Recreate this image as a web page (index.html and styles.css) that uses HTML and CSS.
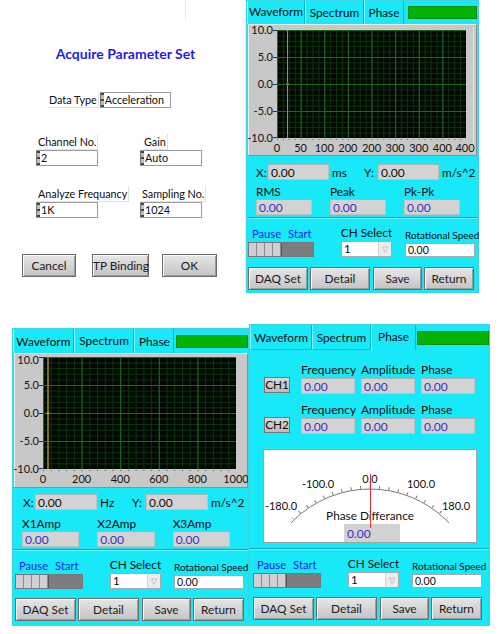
FILE: index.html
```html
<!DOCTYPE html>
<html lang="en">
<head>
    <meta charset="UTF-8">
    <meta name="viewport" content="width=device-width, initial-scale=1.0">
    <title>Acquire Parameter Set</title>
    <link rel="stylesheet" href="styles.css">
</head>
<body>
<div class="sheet">
    <div class="row row-top">
        <!-- acquisition settings dialog -->
        <div class="dialog">
            <div class="dlg-mark"></div>
            <h2 class="dlg-title">Acquire Parameter Set</h2>
            <div class="dtype">
                <span class="lbl">Data Type</span>
                <span class="ring wide">Acceleration</span>
            </div>
            <div class="field-grid">
                <div class="field"><span class="lbl">Channel No.</span><span class="ring">2</span></div>
                <div class="field gain"><span class="lbl">Gain</span><span class="ring">Auto</span></div>
                <div class="field"><span class="lbl">Analyze Frequancy</span><span class="ring">1K</span></div>
                <div class="field"><span class="lbl">Sampling No.</span><span class="ring">1024</span></div>
            </div>
            <div class="dlg-buttons">
                <button class="btn b-cancel">Cancel</button>
                <button class="btn b-tp">TP Binding</button>
                <button class="btn b-ok">OK</button>
            </div>
        </div>

        <!-- waveform page -->
        <div class="panel p-wave">
            <div class="tabs">
                <span class="tab active">Waveform</span>
                <span class="tab">Spectrum</span>
                <span class="tab">Phase</span>
                <span class="led"></span>
            </div>
            <div class="graph">
                <svg width="229" height="132" viewBox="0 0 229 132">
                    <defs>
                        <pattern id="w-min" x="29" y="6" width="5.90625" height="5.4" patternUnits="userSpaceOnUse">
                            <path d="M0.5 0V5.4M0 0.5H5.90625" stroke="#0b360b" fill="none"/>
                        </pattern>
                        <pattern id="w-maj" x="29" y="6" width="23.625" height="27" patternUnits="userSpaceOnUse">
                            <path d="M0.5 0V27M0 0.5H23.625" stroke="#1d691d" fill="none"/>
                        </pattern>
                    </defs>
                    <rect width="229" height="132" fill="#c8c8c8"/>
                    <path d="M0.5 131V0.5H228" stroke="#ececec" fill="none"/>
                    <path d="M228.5 1V131M0 131.5H229" stroke="#8e8e8e" fill="none"/>
                    <path d="M225.5 3V129" stroke="#e2e2e2" fill="none"/>
                    <rect x="29" y="6" width="189" height="108" fill="#010701"/>
                    <rect x="29" y="6" width="189" height="108" fill="url(#w-min)"/>
                    <rect x="29" y="6" width="189" height="108" fill="url(#w-maj)"/>
                    <line x1="39.5" y1="6" x2="39.5" y2="114" stroke="#a69c12"/>
                    <circle cx="39.5" cy="60" r="1.6" fill="#6f7a1a"/>
                    <path d="M25 6.5H29M25 33.5H29M25 60.5H29M25 87.5H29M25 113.5H29" stroke="#333"/>
                    <line x1="29" y1="115.5" x2="218" y2="115.5" stroke="#666" stroke-dasharray="1 4.906"/>
                    <g class="ylab">
                        <text x="25" y="10">10.0</text>
                        <text x="25" y="37">5.0</text>
                        <text x="25" y="64">0.0</text>
                        <text x="25" y="91">-5.0</text>
                        <text x="25" y="118">-10.0</text>
                    </g>
                    <g class="xlab">
                        <text x="29" y="128">0</text>
                        <text x="52.6" y="128">50</text>
                        <text x="76.3" y="128">100</text>
                        <text x="99.9" y="128">200</text>
                        <text x="123.5" y="128">200</text>
                        <text x="147.1" y="128">300</text>
                        <text x="170.8" y="128">300</text>
                        <text x="194.4" y="128">400</text>
                        <text x="217" y="128">400</text>
                    </g>
                </svg>
            </div>
            <div class="cursor">
                <span class="c-lbl">X:</span><span class="box c-box">0.00</span><span class="c-unit">ms</span>
                <span class="c-lbl y">Y:</span><span class="box c-box">0.00</span><span class="c-unit">m/s^2</span>
            </div>
            <div class="stats">
                <div class="stat"><span class="stat-lbl">RMS</span><span class="box val">0.00</span></div>
                <div class="stat"><span class="stat-lbl">Peak</span><span class="box val">0.00</span></div>
                <div class="stat"><span class="stat-lbl">Pk-Pk</span><span class="box val">0.00</span></div>
            </div>
            <div class="lower">
                <div class="divider"></div>
                <div class="controls">
                    <div class="sw-col">
                        <div class="pause-start"><span>Pause</span><span>Start</span></div>
                        <div class="switch"><span class="knob"></span><span class="rail"></span></div>
                    </div>
                    <div class="ch-col">
                        <span class="ch-lbl">CH Select</span>
                        <div class="select"><span class="sel-val">1</span><span class="arrow">▽</span></div>
                    </div>
                    <div class="rot-col">
                        <span class="rot-lbl">Rotational Speed</span>
                        <span class="rot-input">0.00</span>
                    </div>
                </div>
                <div class="actions">
                    <button class="btn b-daq">DAQ Set</button>
                    <button class="btn b-detail">Detail</button>
                    <button class="btn b-save">Save</button>
                    <button class="btn b-return">Return</button>
                </div>
            </div>
        </div>
    </div>

    <div class="row row-bottom">
        <!-- spectrum page -->
        <div class="panel p-spec">
            <div class="tabs">
                <span class="tab">Waveform</span>
                <span class="tab active">Spectrum</span>
                <span class="tab">Phase</span>
                <span class="led"></span>
            </div>
            <div class="graph">
                <svg width="234" height="135" viewBox="0 0 234 135">
                    <defs>
                        <pattern id="s-min" x="29" y="4" width="7.72" height="5.6" patternUnits="userSpaceOnUse">
                            <path d="M0.5 0V5.6M0 0.5H7.72" stroke="#0b360b" fill="none"/>
                        </pattern>
                        <pattern id="s-maj" x="29" y="4" width="38.6" height="28" patternUnits="userSpaceOnUse">
                            <path d="M0.5 0V28M0 0.5H38.6" stroke="#1d691d" fill="none"/>
                        </pattern>
                    </defs>
                    <rect width="234" height="135" fill="#c8c8c8"/>
                    <path d="M0.5 134V0.5H233" stroke="#ececec" fill="none"/>
                    <path d="M233.5 1V135M0 134.5H234" stroke="#8e8e8e" fill="none"/>
                    <rect x="29" y="4" width="193" height="112" fill="#010701"/>
                    <rect x="29" y="4" width="193" height="112" fill="url(#s-min)"/>
                    <rect x="29" y="4" width="193" height="112" fill="url(#s-maj)"/>
                    <rect x="33" y="4" width="2" height="112" fill="#7d7010"/>
                    <circle cx="34" cy="60" r="1.6" fill="#a0a030"/>
                    <path d="M25 4.5H29M25 32.5H29M25 60.5H29M25 88.5H29M25 115.5H29" stroke="#333"/>
                    <line x1="29" y1="117.5" x2="222" y2="117.5" stroke="#555" stroke-dasharray="1 6.72"/>
                    <g class="ylab">
                        <text x="25" y="10.5">10.0</text>
                        <text x="25" y="36">5.0</text>
                        <text x="25" y="64">0.0</text>
                        <text x="25" y="92">-5.0</text>
                        <text x="25" y="120">-10.0</text>
                    </g>
                    <g class="xlab">
                        <text x="29" y="130">0</text>
                        <text x="67.6" y="130">200</text>
                        <text x="106.2" y="130">400</text>
                        <text x="144.8" y="130">600</text>
                        <text x="183.4" y="130">800</text>
                        <text x="222" y="130">1000</text>
                    </g>
                </svg>
            </div>
            <div class="cursor">
                <span class="c-lbl">X:</span><span class="box c-box">0.00</span><span class="c-unit">Hz</span>
                <span class="c-lbl y">Y:</span><span class="box c-box">0.00</span><span class="c-unit">m/s^2</span>
            </div>
            <div class="stats">
                <div class="stat"><span class="stat-lbl">X1Amp</span><span class="box val">0.00</span></div>
                <div class="stat"><span class="stat-lbl">X2Amp</span><span class="box val">0.00</span></div>
                <div class="stat"><span class="stat-lbl">X3Amp</span><span class="box val">0.00</span></div>
            </div>
            <div class="lower">
                <div class="divider"></div>
                <div class="controls">
                    <div class="sw-col">
                        <div class="pause-start"><span>Pause</span><span>Start</span></div>
                        <div class="switch"><span class="knob"></span><span class="rail"></span></div>
                    </div>
                    <div class="ch-col">
                        <span class="ch-lbl">CH Select</span>
                        <div class="select"><span class="sel-val">1</span><span class="arrow">▽</span></div>
                    </div>
                    <div class="rot-col">
                        <span class="rot-lbl">Rotational Speed</span>
                        <span class="rot-input">0.00</span>
                    </div>
                </div>
                <div class="actions">
                    <button class="btn b-daq">DAQ Set</button>
                    <button class="btn b-detail">Detail</button>
                    <button class="btn b-save">Save</button>
                    <button class="btn b-return">Return</button>
                </div>
            </div>
        </div>

        <!-- phase page -->
        <div class="panel p-phase">
            <div class="tabs">
                <span class="tab">Waveform</span>
                <span class="tab">Spectrum</span>
                <span class="tab active">Phase</span>
                <span class="led"></span>
            </div>
            <div class="ch-row">
                <span class="ch-btn">CH1</span>
                <div class="pcell"><span class="plbl">Frequency</span><span class="box val">0.00</span></div>
                <div class="pcell"><span class="plbl">Amplitude</span><span class="box val">0.00</span></div>
                <div class="pcell"><span class="plbl">Phase</span><span class="box val">0.00</span></div>
            </div>
            <div class="ch-row">
                <span class="ch-btn">CH2</span>
                <div class="pcell"><span class="plbl">Frequency</span><span class="box val">0.00</span></div>
                <div class="pcell"><span class="plbl">Amplitude</span><span class="box val">0.00</span></div>
                <div class="pcell"><span class="plbl">Phase</span><span class="box val">0.00</span></div>
            </div>
            <div class="meter">
                <svg width="212" height="92" viewBox="0 0 212 92">
                    <path d="M30 69.9A109 109 0 0 1 182 69.9" stroke="#7a7a7a" fill="none"/>
                    <path d="M28.6 68.4A111 111 0 0 1 183.4 68.4" stroke="#7a7a7a" stroke-width="3" fill="none" stroke-dasharray="1 8.514" stroke-dashoffset="0.5"/>
                    <path d="M30 69.9L27 73M182 69.9L185 73" stroke="#7a7a7a" fill="none"/>
                    <g class="mlab">
                        <text x="106" y="33">0.0</text>
                        <text x="54" y="38">-100.0</text>
                        <text x="157" y="38">100.0</text>
                        <text x="17" y="60">-180.0</text>
                        <text x="192" y="60">180.0</text>
                        <text class="mtitle" x="106" y="70">Phase Differance</text>
                    </g>
                    <rect x="80" y="74" width="56" height="20" fill="#d2d2d2"/>
                    <text class="mval" x="83" y="88">0.00</text>
                    <line x1="106.5" y1="24" x2="106.5" y2="78" stroke="#e23030"/>
                </svg>
            </div>
            <div class="lower">
                <div class="divider"></div>
                <div class="controls">
                    <div class="sw-col">
                        <div class="pause-start"><span>Pause</span><span>Start</span></div>
                        <div class="switch"><span class="knob"></span><span class="rail"></span></div>
                    </div>
                    <div class="ch-col">
                        <span class="ch-lbl">CH Select</span>
                        <div class="select"><span class="sel-val">1</span><span class="arrow">▽</span></div>
                    </div>
                    <div class="rot-col">
                        <span class="rot-lbl">Rotational Speed</span>
                        <span class="rot-input">0.00</span>
                    </div>
                </div>
                <div class="actions">
                    <button class="btn b-daq">DAQ Set</button>
                    <button class="btn b-detail">Detail</button>
                    <button class="btn b-save">Save</button>
                    <button class="btn b-return">Return</button>
                </div>
            </div>
        </div>
    </div>
</div>
</body>
</html>
```

FILE: styles.css
```css
* {
    box-sizing: border-box;
}
body {
    margin: 0;
    font-family: Lato, "Noto Sans", sans-serif;
    font-size: 11.5px;
    color: #0c0c0c;
    background: #fff;
}
.sheet {
    width: 499px;
    height: 634px;
    overflow: hidden;
}
.row {
    display: flex;
    align-items: flex-start;
}
.row-bottom {
    margin-top: 31px;
}

/* dialog */
.dialog {
    width: 246px;
    height: 293px;
    border-right: 1px solid #f0f0f0;
}
.dlg-mark {
    width: 1px;
    height: 20px;
    margin-left: 185px;
    background: #e4e4e4;
}
.dlg-title {
    margin: 25px 0 0;
    padding-left: 6px;
    text-align: center;
    font-size: 14px;
    line-height: 18px;
    font-weight: bold;
    color: #1e1ee6;
}
.dtype {
    display: flex;
    align-items: center;
    margin-top: 29px;
    padding-left: 48px;
}
.lbl {
    display: inline-block;
    line-height: 15px;
    padding: 0 1px;
    font-size: 10.8px;
    white-space: nowrap;
    border-right: 1px solid #e2e2e2;
    border-bottom: 1px solid #e2e2e2;
}
.dtype .lbl {
    margin-right: 1px;
}
.ring {
    display: flex;
    align-items: center;
    width: 62px;
    height: 16px;
    font-size: 10.8px;
    background: #fff;
    border: 1px solid #9c9c9c;
    border-left-color: #777;
    line-height: 14px;
}
.ring::before {
    content: "";
    width: 3px;
    height: 14px;
    margin-right: 1px;
    background: linear-gradient(#444 0 2px, #bbb 2px 6px, #444 6px 8px, #bbb 8px 12px, #444 12px 14px);
}
.ring.wide {
    width: 71px;
}
.field-grid {
    display: grid;
    grid-template-columns: 62px 62px;
    column-gap: 42px;
    row-gap: 20px;
    margin-top: 26px;
    padding-left: 36px;
}
.field {
    display: flex;
    flex-direction: column;
    align-items: flex-start;
}
.field .lbl {
    margin-left: 1px;
}
.field.gain .lbl {
    margin-left: 3px;
}
.dlg-buttons {
    display: flex;
    margin-top: 36px;
    padding-left: 22px;
}
.btn {
    height: 23px;
    padding: 0;
    font-family: inherit;
    font-size: 11.8px;
    color: #1a1a1a;
    background: linear-gradient(#e6e6e6, #c4c4c4);
    border: 1px solid #6c6c6c;
    box-shadow: inset 1px 1px 0 #f8f8f8, inset -1px -1px 0 #9c9c9c;
    white-space: nowrap;
}
.b-cancel { width: 54px; }
.b-tp { width: 57px; margin-left: 16px; }
.b-ok { width: 55px; margin-left: 13px; }

/* instrument panels */
.panel {
    display: flex;
    flex-direction: column;
    background: #17e9f9;
    border: 1px solid #3cd3e2;
}
.p-wave {
    width: 233px;
    height: 293px;
    padding-bottom: 2px;
}
.p-spec {
    width: 237px;
    height: 298px;
    margin-top: 4px;
    margin-left: 12px;
    padding-bottom: 4px;
}
.p-phase {
    width: 241px;
    height: 302px;
    padding-bottom: 5px;
}
.tabs {
    display: flex;
    align-items: center;
    height: 23px;
}
.p-spec .tabs { height: 24px; }
.p-phase .tabs { height: 25px; }
.tab {
    display: flex;
    align-items: center;
    justify-content: center;
    height: 100%;
    font-size: 11.8px;
    border-left: 1px solid #8af5ff;
    border-right: 1px solid #0cb3c5;
}
.tab.active {
    padding-bottom: 2px;
}
.p-phase .tab {
    border-bottom: 1px solid #10c2d4;
}
.p-phase .tab.active {
    border-bottom: none;
}
.led {
    height: 13px;
    background: #04b204;
    border: 1px solid #0b8b0b;
}
.p-wave .tab:nth-child(1) { width: 58px; }
.p-wave .tab:nth-child(2) { width: 59px; }
.p-wave .tab:nth-child(3) { width: 40px; }
.p-wave .led { width: 69px; margin-left: 4px; }
.p-spec .tab:nth-child(1) { width: 61px; }
.p-spec .tab:nth-child(2) { width: 61px; }
.p-spec .tab:nth-child(3) { width: 40px; }
.p-spec .led { width: 72px; margin-left: 2px; }
.p-phase .tab:nth-child(1) { width: 62px; }
.p-phase .tab:nth-child(2) { width: 59px; }
.p-phase .tab:nth-child(3) { width: 45px; }
.p-phase .led { width: 72px; height: 14px; margin-left: 1px; }

.graph {
    margin: 0 1px;
}
.graph svg,
.meter svg {
    display: block;
}
.graph text,
.meter text {
    font-family: Lato, "Noto Sans", sans-serif;
    font-size: 11px;
    fill: #111;
}
.ylab text {
    text-anchor: end;
}
.xlab text {
    text-anchor: middle;
}

.cursor {
    display: flex;
    align-items: center;
    margin-top: 8px;
    padding-left: 9px;
    font-size: 11.8px;
}
.p-spec .cursor {
    margin-top: 6px;
    padding-left: 10px;
}
.c-lbl {
    width: 12px;
}
.c-lbl.y {
    width: 14px;
}
.c-unit {
    width: 35px;
    padding-left: 3px;
}
.box {
    display: flex;
    align-items: center;
    height: 16px;
    padding-left: 2px;
    font-size: 12px;
    background: #d3d3d3;
    border: 1px solid #c1c1c1;
    border-top-color: #b0b0b0;
}
.c-box {
    width: 61px;
}
.p-spec .c-box {
    width: 62px;
}
.val {
    color: #3a2ec6;
}
.stats {
    display: flex;
    margin-top: 4px;
    padding-left: 9px;
}
.p-spec .stats {
    margin-top: 6px;
}
.stat {
    display: flex;
    flex-direction: column;
    width: 60px;
    margin-right: 18px;
}
.p-spec .stat {
    width: 61px;
}
.stat-lbl {
    font-size: 11.8px;
    line-height: 15px;
}

/* phase page */
.ch-row {
    display: flex;
    align-items: flex-end;
    margin-top: 12px;
    padding-left: 14px;
}
.ch-row + .ch-row {
    margin-top: 8px;
}
.ch-btn {
    width: 26px;
    height: 16px;
    margin: 0 11px 1px 0;
    font-size: 11.8px;
    line-height: 14px;
    text-align: center;
    background: linear-gradient(#dadada, #bcbcbc);
    border: 1px solid #777;
}
.pcell {
    display: flex;
    flex-direction: column;
    width: 54px;
    margin-right: 6px;
}
.plbl {
    font-size: 12px;
    line-height: 16px;
    white-space: nowrap;
}
.meter {
    width: 214px;
    height: 94px;
    margin: 15px 0 0 13px;
    background: #fff;
    border: 1px solid #a2a2a2;
    overflow: hidden;
}
.mlab text {
    text-anchor: middle;
}
.meter .mtitle {
    font-size: 11.8px;
}
.meter .mval {
    font-size: 12px;
    fill: #3a2ec6;
}

/* bottom controls shared by the three pages */
.lower {
    margin-top: auto;
}
.p-wave .lower { padding-left: 1px; }
.p-spec .lower { padding-left: 2px; }
.p-phase .lower { padding-left: 3px; }
.divider {
    height: 2px;
    border-top: 1px solid #0aa7b9;
    border-bottom: 1px solid #72f3ff;
}
.p-wave .divider { margin-left: -1px; }
.p-spec .divider { margin-left: -2px; }
.p-phase .divider { margin-left: -3px; }
.controls {
    display: flex;
    align-items: flex-end;
    padding-top: 7px;
}
.sw-col {
    width: 68px;
}
.p-wave .sw-col {
    width: 66px;
}
.pause-start {
    display: flex;
    gap: 7px;
    padding-left: 4px;
    margin-bottom: 1px;
    font-size: 11.2px;
    line-height: 14px;
    color: #2020ee;
}
.switch {
    display: flex;
    height: 15px;
    border: 1px solid #777;
}
.knob {
    width: 33px;
    background: repeating-linear-gradient(90deg, #d0d0d0 0 7px, #8c8c8c 7px 8px);
    border-right: 1px solid #555;
}
.rail {
    flex: 1;
    background: #7d7d7d;
}
.ch-col {
    display: flex;
    flex-direction: column;
    align-items: center;
    width: 51px;
    margin-left: 27px;
}
.ch-lbl {
    margin-bottom: 1px;
    font-size: 11.8px;
    line-height: 14px;
    white-space: nowrap;
}
.select {
    display: flex;
    width: 51px;
    height: 16px;
    background: #fff;
    border: 1px solid #a8a8a8;
}
.sel-val {
    flex: 1;
    padding-left: 2px;
    font-size: 11.5px;
    line-height: 14px;
}
.arrow {
    width: 13px;
    font-size: 8px;
    line-height: 14px;
    text-align: center;
    color: #a6a6a6;
    background: #ececec;
    border-left: 1px solid #d4d4d4;
}
.rot-col {
    display: flex;
    flex-direction: column;
    width: 70px;
    margin-left: 13px;
}
.rot-lbl {
    margin-bottom: 1px;
    font-size: 10px;
    line-height: 13px;
    white-space: nowrap;
}
.rot-input {
    height: 14px;
    padding-left: 2px;
    font-size: 10.5px;
    line-height: 12px;
    background: #fff;
    border: 1px solid #a8a8a8;
}
.actions {
    display: flex;
    margin-top: 9px;
}
.p-wave .actions {
    margin-top: 10px;
}
.b-daq { width: 61px; }
.b-detail { width: 61px; margin-left: 2px; }
.b-save { width: 49px; margin-left: 3px; }
.b-return { width: 51px; margin-left: 2px; }
.p-wave .b-daq,
.p-wave .b-detail { width: 60px; }
.p-wave .b-return { width: 50px; }
```
